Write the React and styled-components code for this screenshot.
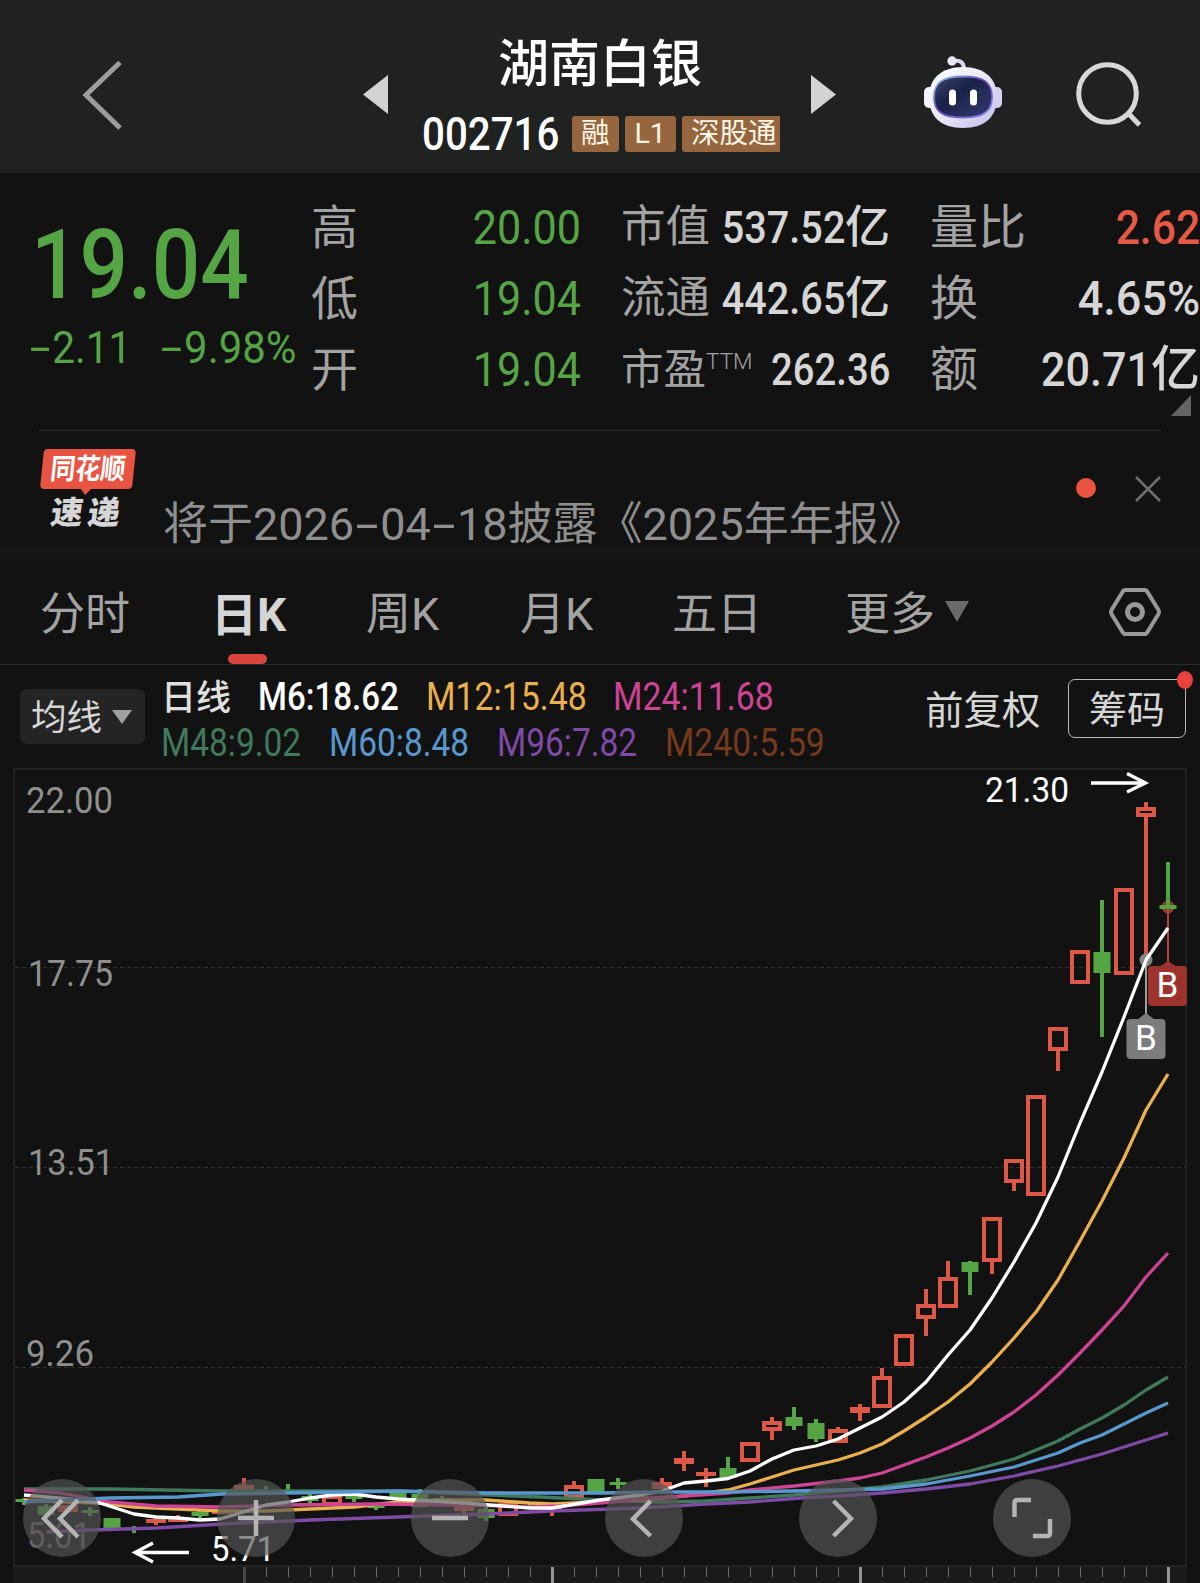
// Components==============
import React from "react";
import styled, { createGlobalStyle, ThemeProvider } from "styled-components";
// =========================

const theme = {
  bg: "#121212",
  header: "#202221",
  line: "#2c2c2c",
  label: "#a3a3a3",
  value: "#d6d6d6",
  white: "#ffffff",
  green: "#56a545",
  red: "#e65a45",
  tag: "#96663e",
};

const GlobalStyle = createGlobalStyle`
  * {
    box-sizing: border-box;
  }
  body {
    margin: 0;
    background: #121212;
    font-family: Roboto, "Noto Sans CJK SC", sans-serif;
  }
`;

const Page = styled.div`
  width: 1200px;
  height: 1583px;
  overflow: hidden;
  display: flex;
  flex-direction: column;
  background: ${({ theme }) => theme.bg};
`;

// narrow digits, squeezed toward one side
const Num = styled.span`
  display: inline-block;
  white-space: nowrap;
  transform: scaleX(${({ $fit }) => $fit || 0.88});
  transform-origin: ${({ $from }) => $from || "right"} center;
`;

const DashBox = styled.span`
  display: inline-block;
  width: ${({ $w }) => $w || 0.6}em;
  text-align: center;
  transform: scaleX(1.85);
`;

const Dash = ({ w }) => <DashBox $w={w}>-</DashBox>;

// Header ==================
const Header = styled.header`
  height: 173px;
  flex: none;
  display: grid;
  grid-template-columns: 363px 26px 422px 26px 87px 80px 1fr;
  background: ${({ theme }) => theme.header};
  color: ${({ theme }) => theme.white};
`;

const BackIcon = styled.svg`
  width: 46px;
  height: 76px;
  margin: 57px 0 0 80px;
`;

const Arrow = styled.svg`
  width: 26px;
  height: 40px;
  margin-top: 75px;
`;

const TitleBlock = styled.div`
  display: flex;
  flex-direction: column;
  align-items: center;
  padding-top: 32px;
`;

const Name = styled.h1`
  margin: 0;
  font-size: 51px;
  line-height: 65px;
  font-weight: 500;
`;

const CodeRow = styled.div`
  display: flex;
  align-items: center;
  align-self: flex-start;
  height: 36px;
  margin: 19px 0 0 33px;
  gap: 6px;
`;

const Code = styled.div`
  width: 144px;
  flex: none;
  font-size: 46px;
  line-height: 36px;
  font-weight: 500;
`;

const Tags = styled.div`
  display: flex;
  gap: 6px;
  width: 208px;
  overflow: hidden;
`;

const Tag = styled.span`
  flex: none;
  height: 36px;
  padding: 0 ${({ $pad }) => $pad || 9}px;
  line-height: 36px;
  font-size: 28.5px;
  border-radius: 3px;
  color: #fff6e6;
  background: ${({ theme }) => theme.tag};
`;

const Robot = styled.svg`
  width: 80px;
  height: 76px;
  margin-top: 55px;
`;

const SearchIcon = styled.svg`
  width: 72px;
  height: 72px;
  margin: 60px 0 0 69px;
`;

// Quote ===================
const Quote = styled.section`
  height: 257px;
  flex: none;
  display: grid;
  grid-template-columns: 311px 270px 40px 269px 40px 270px;
  padding-top: 19px;
  color: ${({ theme }) => theme.value};
  position: relative;
`;

const PriceBlock = styled.div`
  color: ${({ theme }) => theme.green};
  padding: 24px 0 0 28px;
`;

const Price = styled.div`
  font-size: 97px;
  line-height: 99px;
  font-weight: 500;
  padding-left: 3px;
`;

const Change = styled.div`
  display: flex;
  font-size: 45px;
  line-height: 66px;
  white-space: nowrap;
`;

const ChangeCell = styled.div`
  width: ${({ $w }) => $w}px;
`;

const Column = styled.div`
  grid-column: ${({ $at }) => $at};
`;

const Stat = styled.div`
  display: flex;
  justify-content: space-between;
  height: 71px;
  line-height: 71px;
  white-space: nowrap;
  font-size: ${({ $size }) => $size}px;
`;

const StatLabel = styled.span`
  color: ${({ theme }) => theme.label};
  font-size: ${({ $size }) => $size}px;
  display: flex;
`;

const Ttm = styled.span`
  font-size: 22.5px;
  line-height: 54px;
  font-weight: 300;
`;

const StatValue = styled.span`
  display: flex;
  justify-content: flex-end;
  width: 0;
  font-weight: ${({ $weight }) => $weight || 500};
  color: ${({ $color, theme }) => theme[$color || "value"]};
`;

const Corner = styled.svg`
  position: absolute;
  right: 9px;
  bottom: 14px;
  width: 20px;
  height: 21px;
`;

// News ====================
const News = styled.section`
  height: 117px;
  flex: none;
  display: flex;
  margin: 0 39px;
  border-top: 1px solid ${({ theme }) => theme.line};
`;

const Badge = styled.div`
  width: 98px;
  flex: none;
  padding-top: 18px;
`;

const BadgeTop = styled.div`
  position: relative;
  width: 92px;
  height: 40px;
  margin-left: 3px;
  border-radius: 4px;
  transform: skewX(-6deg);
  background: #e95442;
  color: #fff;
  font-size: 25px;
  line-height: 42px;
  font-weight: 700;
  text-align: center;

  &::after {
    content: "";
    position: absolute;
    left: 40px;
    top: 39px;
    border: 6px solid transparent;
    border-top: 7px solid #e95442;
    border-bottom: 0;
  }
`;

const BadgeWord = styled.span`
  display: inline-block;
  transform: scaleY(1.15);
`;

const BadgeBottom = styled.div`
  margin: 7px 0 0 12px;
  font-size: 32px;
  line-height: 34px;
  font-weight: 900;
  letter-spacing: 5px;
  color: ${({ theme }) => theme.value};
  transform: skewX(-8deg);
  white-space: nowrap;
`;

const NewsText = styled.div`
  flex: 1;
  padding: 73px 0 0 26px;
  font-size: 45px;
  line-height: 42px;
  color: #8f8f8f;
  white-space: nowrap;
`;

const Dot = styled.i`
  width: 20px;
  height: 20px;
  margin: 47px 39px 0 0;
  border-radius: 50%;
  background: #e95442;
`;

const CloseIcon = styled.svg`
  width: 26px;
  height: 26px;
  margin-top: 45px;
`;

const Band = styled.div`
  height: 12px;
  flex: none;
  background: #161616;
`;

// Tabs ====================
const Tabs = styled.nav`
  height: 106px;
  flex: none;
  display: grid;
  grid-template-columns: 171px 155px 154px 152px 173px 263px 1fr;
  padding-left: 40px;
  border-bottom: 1px solid ${({ theme }) => theme.line};
`;

const Tab = styled.div`
  position: relative;
  display: flex;
  font-size: ${({ $active }) => ($active ? 46 : 45)}px;
  line-height: 112px;
  height: 105px;
  white-space: nowrap;
  font-weight: ${({ $active }) => ($active ? 700 : 400)};
  color: ${({ $active, theme }) => ($active ? theme.value : theme.label)};
`;

const Underline = styled.i`
  position: absolute;
  left: 17px;
  bottom: 0;
  width: 39px;
  height: 10px;
  border-radius: 5px;
  background: #d9453d;
`;

const Caret = styled.svg`
  width: ${({ $w }) => $w}px;
  height: ${({ $h }) => $h}px;
  margin-left: 10px;
  margin-top: ${({ $top }) => $top || 0}px;
`;

const HexIcon = styled.svg`
  width: 54px;
  height: 52px;
  margin-top: 27px;
`;

// Legend ==================
const Legend = styled.div`
  height: 95px;
  flex: none;
  display: flex;
  padding-left: 20px;
`;

const Picker = styled.button`
  width: 125px;
  height: 55px;
  margin-top: 24px;
  padding: 0 0 0 11px;
  border: 0;
  border-radius: 7px;
  background: #242424;
  color: ${({ theme }) => theme.value};
  font: 35.5px/53px Roboto, "Noto Sans CJK SC", sans-serif;
  display: flex;
  align-items: center;
`;

const PickerText = styled.span`
  padding-top: 4px;
`;

const Averages = styled.div`
  width: 780px;
  padding: 9px 0 0 16px;
`;

const AvgRow = styled.div`
  display: flex;
  height: 46px;
  line-height: 46px;
`;

const Avg = styled.div`
  width: ${({ $w }) => $w}px;
  color: ${({ $color }) => $color};
  font-size: ${({ $size }) => $size || 38}px;
  font-weight: ${({ $weight }) => $weight || 400};
  padding-top: ${({ $drop }) => $drop || 0}px;
  white-space: nowrap;
`;

const Adjust = styled.div`
  width: 143px;
  line-height: 91px;
  font-size: 38.5px;
  color: ${({ theme }) => theme.value};
  white-space: nowrap;
`;

const Chips = styled.button`
  position: relative;
  width: 118px;
  height: 59px;
  margin-top: 14px;
  padding: 2px 0 0;
  border: 1px solid #bbb;
  border-radius: 7px;
  background: none;
  color: ${({ theme }) => theme.value};
  font: 38px/54px Roboto, "Noto Sans CJK SC", sans-serif;

  &::after {
    content: "";
    position: absolute;
    right: -8px;
    top: -9px;
    width: 16px;
    height: 18px;
    border-radius: 50%;
    background: #e8413e;
  }
`;

// Chart ===================
const ChartWrap = styled.div`
  position: relative;
  height: 823px;
  flex: none;
`;

const ChartSvg = styled.svg`
  display: block;
  width: 1200px;
  height: 823px;
  font-family: Roboto, sans-serif;
`;

const Controls = styled.div`
  position: absolute;
  left: 23px;
  top: 719px;
  display: flex;
  gap: 116px;
`;

const Control = styled.button`
  width: 78px;
  height: 78px;
  padding: 0;
  border: 0;
  border-radius: 50%;
  background: rgba(86, 86, 86, 0.68);

  svg {
    display: block;
    width: 78px;
    height: 78px;
    fill: none;
    stroke: #b4b4b4;
    stroke-width: 4.5;
  }
`;

// x, high, open/close top, open/close bottom, low, kind
// kinds: r = rising (hollow), g = falling (solid), x = rising with a thin body
const candles = [
  [24, 1498, 1499, 1502, 1505, "g"],
  [46, 1504, 1506, 1515, 1515, "g"],
  [68, 1505, 1505, 1512, 1512, "x"],
  [90, 1507, 1510, 1513, 1516, "g"],
  [112, 1518, 1518, 1528, 1528, "g"],
  [134, 1526, 1528, 1530, 1533, "g"],
  [156, 1517, 1519, 1523, 1525, "x"],
  [178, 1515, 1518, 1522, 1522, "x"],
  [200, 1509, 1512, 1516, 1519, "g"],
  [222, 1510, 1510, 1514, 1514, "x"],
  [244, 1478, 1485, 1491, 1491, "x"],
  [266, 1486, 1490, 1492, 1492, "g"],
  [288, 1484, 1491, 1493, 1494, "g"],
  [310, 1491, 1496, 1501, 1503, "g"],
  [332, 1495, 1495, 1506, 1506, "r"],
  [354, 1493, 1496, 1499, 1502, "g"],
  [376, 1504, 1506, 1508, 1510, "g"],
  [398, 1493, 1493, 1499, 1500, "g"],
  [420, 1489, 1494, 1507, 1507, "g"],
  [442, 1496, 1498, 1504, 1504, "g"],
  [464, 1505, 1505, 1511, 1514, "x"],
  [486, 1506, 1509, 1518, 1521, "g"],
  [508, 1502, 1503, 1516, 1516, "r"],
  [530, 1504, 1506, 1509, 1509, "g"],
  [552, 1508, 1508, 1512, 1516, "x"],
  [574, 1481, 1485, 1499, 1499, "r"],
  [596, 1479, 1479, 1492, 1492, "g"],
  [618, 1478, 1482, 1485, 1489, "g"],
  [640, 1494, 1496, 1499, 1499, "g"],
  [662, 1478, 1482, 1489, 1489, "x"],
  [684, 1451, 1458, 1464, 1471, "x"],
  [706, 1468, 1472, 1476, 1487, "x"],
  [728, 1457, 1468, 1478, 1478, "g"],
  [750, 1442, 1442, 1462, 1462, "r"],
  [772, 1417, 1421, 1431, 1440, "r"],
  [794, 1407, 1417, 1426, 1430, "g"],
  [816, 1419, 1423, 1439, 1442, "g"],
  [838, 1427, 1429, 1443, 1443, "r"],
  [860, 1404, 1407, 1413, 1421, "x"],
  [882, 1368, 1376, 1408, 1408, "r"],
  [904, 1334, 1334, 1366, 1366, "r"],
  [926, 1289, 1304, 1319, 1336, "r"],
  [948, 1261, 1277, 1308, 1308, "r"],
  [970, 1261, 1262, 1272, 1295, "g"],
  [992, 1217, 1217, 1262, 1274, "r"],
  [1014, 1159, 1159, 1183, 1191, "r"],
  [1036, 1095, 1095, 1196, 1196, "r"],
  [1058, 1027, 1027, 1051, 1071, "r"],
  [1080, 950, 950, 984, 984, "r"],
  [1102, 900, 952, 973, 1037, "g"],
  [1124, 888, 888, 975, 975, "r"],
  [1146, 802, 807, 817, 958, "r"],
];

const averageLines = [
  {
    color: "#7f4aa5",
    points:
      "46,1532 90,1530 156,1528 222,1524 310,1520 398,1517 486,1514 552,1511 640,1508 706,1504 750,1502 800,1498 838,1496 882,1493 926,1489 970,1484 1014,1476 1058,1466 1102,1454 1168,1433",
  },
  {
    color: "#40795c",
    points:
      "24,1489 110,1489 222,1491 398,1491 464,1494 540,1497 600,1500 660,1502 706,1501 750,1498 794,1495 838,1491 882,1487 926,1480 970,1471 1014,1459 1058,1441 1080,1429 1102,1418 1124,1405 1146,1390 1168,1377",
  },
  {
    color: "#eab04d",
    points:
      "24,1500 68,1502 100,1503 134,1507 178,1509 222,1511 266,1511 310,1509 354,1507 398,1502 440,1500 486,1500 530,1503 552,1504 574,1503 640,1500 684,1496 706,1493 728,1490 750,1484 772,1477 794,1470 816,1465 838,1460 860,1453 882,1444 904,1431 926,1417 948,1402 970,1384 992,1362 1014,1338 1036,1312 1058,1280 1080,1241 1102,1201 1124,1158 1146,1110 1168,1074",
  },
  {
    color: "#ce4494",
    points:
      "24,1490 60,1493 110,1502 156,1506 222,1507 288,1505 376,1504 464,1505 530,1507 560,1506 600,1503 640,1499 684,1496 728,1493 750,1490 794,1486 838,1481 860,1478 882,1473 904,1465 926,1457 948,1448 970,1438 992,1426 1014,1412 1036,1395 1058,1375 1080,1353 1102,1330 1124,1306 1146,1277 1168,1253",
  },
  {
    color: "#fff",
    points:
      "24,1495 68,1499 100,1503 134,1514 156,1517 178,1518 200,1520 220,1519 240,1513 266,1505 288,1502 310,1498 332,1495 354,1494 376,1497 398,1499 464,1503 530,1508 552,1508 600,1500 640,1495 662,1491 684,1483 706,1481 728,1478.5 750,1471 772,1459 794,1450 816,1446 838,1439 860,1428 882,1417 904,1402 926,1382 948,1355 970,1330 992,1298 1014,1262 1036,1223 1058,1177 1080,1123 1102,1072 1124,1017 1146,960 1168,928",
  },
  {
    color: "#5998cf",
    points:
      "24,1502 46,1501 110,1498 178,1497 222,1494 288,1493 398,1491 440,1492 486,1493 600,1493 660,1492 728,1492 794,1491 838,1490 882,1489 926,1484 970,1476 1014,1467 1058,1453 1080,1443 1102,1435 1124,1424 1146,1413 1168,1403",
  },
];

const yLabels = [
  ["22.00", 26, 813, 87],
  ["17.75", 28, 986, 85],
  ["13.51", 28, 1175, 86],
  ["9.26", 26, 1366, 68],
  ["5.01", 27, 1548, 64],
];

function Candle({ data }) {
  const [x, high, top, bottom, low, kind] = data;
  if (kind === "g") {
    return (
      <g fill="#56a545">
        <rect x={x - 2} y={high} width={4} height={low - high} />
        <rect x={x - 8.5} y={top} width={17} height={bottom - top} />
      </g>
    );
  }
  return (
    <g fill="#dd5846">
      <rect x={x - 2} y={high} width={4} height={top - high} />
      <rect x={x - 2} y={bottom} width={4} height={low - bottom} />
      {kind === "x" ? (
        <rect x={x - 10} y={top} width={20} height={bottom - top} />
      ) : (
        <rect
          x={x - 8}
          y={top + 2}
          width={16}
          height={bottom - top - 4}
          fill="none"
          stroke="#dd5846"
          strokeWidth={4}
        />
      )}
    </g>
  );
}

function Chart() {
  const ticks = [];
  for (let x = 244; x <= 1168; x += 22) ticks.push(x);

  return (
    <ChartSvg viewBox="0 760 1200 823">
      <rect x={13} y={1567} width={1174} height={16} fill="#1a1a1a" />
      <rect
        x={14}
        y={769}
        width={1172}
        height={797}
        fill="none"
        stroke="#222222"
        strokeWidth={2}
      />
      {[967.5, 1167.5, 1367.5].map((y) => (
        <path
          key={y}
          d={`M15 ${y}H1186`}
          stroke="#303030"
          strokeDasharray="4 3"
        />
      ))}
      {ticks.map((x) => {
        const major = (x - 244) % 308 === 0;
        return (
          <rect
            key={x}
            x={major ? x - 1 : x}
            y={1567}
            width={major ? 3 : 1}
            height={major ? 16 : 10}
            fill={x === 244 ? "#484848" : major ? "#949494" : "#6c6c6c"}
          />
        );
      })}
      {yLabels.map(([text, x, y, w]) => (
        <text
          key={text}
          x={x}
          y={y}
          textLength={w}
          lengthAdjust="spacingAndGlyphs"
          fontSize={37}
          fill={text === "5.01" ? "#6f6f6f" : "#8f8f8f"}
        >
          {text}
        </text>
      ))}
      {candles.map((c) => (
        <Candle key={c[0]} data={c} />
      ))}
      <circle cx={1168} cy={907} r={6.5} fill="#943a31" />
      <path d="M1168 862V907M1159.5 907H1176.5" stroke="#56a545" strokeWidth={4} />
      <path d="M1168 909V962" stroke="#b5403a" strokeWidth={2} />
      <circle cx={1146} cy={960} r={6.5} fill="#858585" />
      <path d="M1146 960V1015" stroke="#a0a0a0" strokeWidth={2} />
      {averageLines.map((l) => (
        <polyline
          key={l.color}
          points={l.points}
          fill="none"
          stroke={l.color}
          strokeWidth={3.3}
          strokeLinejoin="round"
        />
      ))}
      <path d="M1159 967L1168 961L1177 967Z" fill="#9c342d" />
      <rect x={1148} y={966} width={39} height={40} rx={4} fill="#9c342d" />
      <path d="M1137 1020L1146 1013L1155 1020Z" fill="#7c7c7c" />
      <rect x={1126.5} y={1019} width={39} height={40} rx={4} fill="#7c7c7c" />
      <g fill="#fff" fontSize={35} textAnchor="middle">
        <text x={1167.5} y={997}>B</text>
        <text x={1146} y={1050}>B</text>
      </g>
      <g fill="#fff" fontSize={35}>
        <text x={985} y={802} textLength={84} lengthAdjust="spacingAndGlyphs">
          21.30
        </text>
        <text x={211} y={1561} textLength={64} lengthAdjust="spacingAndGlyphs">
          5.71
        </text>
      </g>
      <g fill="none" stroke="#fff" strokeWidth={3.3}>
        <path d="M1091 783H1146M1127 773.5L1145.5 783L1127 792" />
        <path d="M189 1552.5H135M153 1543L135 1552.5L153 1562" />
      </g>
    </ChartSvg>
  );
}

const controls = [
  "M55 21L37 39.5L55 58M39 21L21 39.5L39 58",
  "M39 21V57M21 39H57",
  "M21 39H57",
  "M45.5 22L28 40L45.5 57",
  "M34.5 22L52 39.5L34.5 57",
  "M21.5 38V24Q21.5 21 24.5 21H38M57 40V54Q57 57 54 57H40",
];

export default function App() {
  return (
    <ThemeProvider theme={theme}>
      <GlobalStyle />
      <Page>
        <Header>
          <BackIcon viewBox="0 0 46 76" fill="none" stroke="#9d9d9d" strokeWidth="5">
            <path d="M40 5.5L6 38L40 71" />
          </BackIcon>
          <Arrow viewBox="0 0 26 40" fill="#d3d3d3">
            <path d="M0 19.5L25 0V39Z" />
          </Arrow>
          <TitleBlock>
            <Name>湖南白银</Name>
            <CodeRow>
              <Code>
                <Num $from="left" $fit={0.875}>002716</Num>
              </Code>
              <Tags>
                <Tag>融</Tag>
                <Tag $pad={10}>L1</Tag>
                <Tag>深股通</Tag>
              </Tags>
            </CodeRow>
          </TitleBlock>
          <Arrow viewBox="0 0 26 40" fill="#d3d3d3">
            <path d="M25 19.5L0 0V39Z" />
          </Arrow>
          <span />
          <Robot viewBox="0 0 80 76">
            <defs>
              <linearGradient id="shell" x1="0" y1="0" x2="1" y2="1">
                <stop offset="0" stopColor="#ffffff" />
                <stop offset="0.55" stopColor="#e6e5f5" />
                <stop offset="1" stopColor="#bdb9e8" />
              </linearGradient>
              <linearGradient id="rim" x1="0" y1="0" x2="1" y2="1">
                <stop offset="0" stopColor="#8ed3ea" />
                <stop offset="0.45" stopColor="#6a42bd" />
                <stop offset="1" stopColor="#7480ee" />
              </linearGradient>
              <linearGradient id="face" x1="0" y1="0" x2="1" y2="1">
                <stop offset="0" stopColor="#3e4669" />
                <stop offset="0.4" stopColor="#1b2248" />
                <stop offset="1" stopColor="#343b6e" />
              </linearGradient>
            </defs>
            <path d="M29 6Q39 4 40 13" fill="none" stroke="#d7d7ea" strokeWidth="4" />
            <circle cx="28" cy="6" r="4.7" fill="#e6e6f4" />
            <rect x="0" y="32" width="12" height="21" rx="5" fill="#f3f3fc" />
            <rect x="66" y="32" width="12" height="21" rx="5" fill="#d6d3f2" />
            <path
              d="M39 12C61 12 73 24 73 42C73 62 61 73 39 73C17 73 5 62 5 42C5 24 17 12 39 12Z"
              fill="url(#shell)"
            />
            <path
              d="M39 21.5C59 21.5 68 27 68 42C68 56 60 62.5 39 62.5C18 62.5 10 56 10 42C10 27 19 21.5 39 21.5Z"
              fill="url(#face)"
              stroke="url(#rim)"
              strokeWidth="1.8"
            />
            <rect x="25" y="34.5" width="7" height="16" rx="3.5" fill="#fff" />
            <rect x="46" y="34.5" width="7" height="16" rx="3.5" fill="#fff" />
          </Robot>
          <SearchIcon viewBox="0 0 72 72" fill="none" stroke="#d8d8d8" strokeWidth="5">
            <circle cx="34.5" cy="33.5" r="28.8" />
            <path d="M54.5 52.5L66.5 65" />
          </SearchIcon>
        </Header>

        <Quote>
          <PriceBlock>
            <Price>
              <Num $from="left" $fit={0.88}>19.04</Num>
            </Price>
            <Change>
              <ChangeCell $w={131}>
                <Num $from="left" $fit={0.9}><Dash />2.11</Num>
              </ChangeCell>
              <ChangeCell $w={140}>
                <Num $from="left" $fit={0.93}><Dash />9.98%</Num>
              </ChangeCell>
            </Change>
          </PriceBlock>
          <Column $at={2}>
            {[["高", "20.00"], ["低", "19.04"], ["开", "19.04"]].map(([k, v]) => (
              <Stat key={k} $size={49}>
                <StatLabel $size={47}>{k}</StatLabel>
                <StatValue $color="green" $weight={400}>
                  <Num>{v}</Num>
                </StatValue>
              </Stat>
            ))}
          </Column>
          <Column $at={4}>
            <Stat $size={45}>
              <StatLabel $size={44.5}>市值</StatLabel>
              <StatValue><Num>537.52</Num>亿</StatValue>
            </Stat>
            <Stat $size={45}>
              <StatLabel $size={44.5}>流通</StatLabel>
              <StatValue><Num>442.65</Num>亿</StatValue>
            </Stat>
            <Stat $size={45}>
              <StatLabel $size={42.5}>市盈<Ttm>TTM</Ttm></StatLabel>
              <StatValue><Num $fit={0.85}>262.36</Num></StatValue>
            </Stat>
          </Column>
          <Column $at={6}>
            <Stat $size={49}>
              <StatLabel $size={48}>量比</StatLabel>
              <StatValue $color="red"><Num $fit={0.87}>2.62</Num></StatValue>
            </Stat>
            <Stat $size={49}>
              <StatLabel $size={48}>换</StatLabel>
              <StatValue><Num $fit={0.92}>4.65%</Num></StatValue>
            </Stat>
            <Stat $size={49}>
              <StatLabel $size={48}>额</StatLabel>
              <StatValue><Num>20.71</Num>亿</StatValue>
            </Stat>
          </Column>
          <Corner viewBox="0 0 20 21">
            <path d="M20 0V21H0Z" fill="#646464" />
          </Corner>
        </Quote>

        <News>
          <Badge>
            <BadgeTop>
              <BadgeWord>同花顺</BadgeWord>
            </BadgeTop>
            <BadgeBottom>速递</BadgeBottom>
          </Badge>
          <NewsText>
            将于2026<Dash w={0.58} />04<Dash w={0.58} />18披露《2025年年报》
          </NewsText>
          <Dot />
          <CloseIcon viewBox="0 0 26 26" stroke="#6e6e6e" strokeWidth="2.5">
            <path d="M1 1L25 25M25 1L1 25" />
          </CloseIcon>
        </News>
        <Band />

        <Tabs>
          <Tab>分时</Tab>
          <Tab $active>
            日K
            <Underline />
          </Tab>
          <Tab>周K</Tab>
          <Tab>月K</Tab>
          <Tab>五日</Tab>
          <Tab>
            更多
            <Caret $w={24} $h={21} $top={42} viewBox="0 0 24 21">
              <path d="M0 0H24L12 21Z" fill="#6a6a6a" />
            </Caret>
          </Tab>
          <HexIcon viewBox="0 0 54 52" fill="none" stroke="#989898">
            <path
              d="M17.5 4H36.5Q38.5 4 39.5 6L50.5 24Q51.5 26 50.5 28L39.5 46Q38.5 48 36.5 48H17.5Q15.5 48 14.5 46L3.5 28Q2.5 26 3.5 24L14.5 6Q15.5 4 17.5 4Z"
              strokeWidth="4"
            />
            <circle cx="27" cy="26" r="7.5" strokeWidth="5" />
          </HexIcon>
        </Tabs>

        <Legend>
          <Picker>
            <PickerText>均线</PickerText>
            <Caret $w={20} $h={14} viewBox="0 0 20 14">
              <path d="M0 0H20L10 14Z" fill="#a0a0a0" />
            </Caret>
          </Picker>
          <Averages>
            <AvgRow>
              <Avg $w={97} $size={35} $weight={500} $drop={2} $color="#e0e0e0">日线</Avg>
              <Avg $w={168} $weight={500} $color="#fff">
                <Num $from="left" $fit={0.87}>M6:18.62</Num>
              </Avg>
              <Avg $w={187} $color="#eab04d">
                <Num $from="left" $fit={0.89}>M12:15.48</Num>
              </Avg>
              <Avg $w={160} $color="#ce4494">
                <Num $from="left" $fit={0.89}>M24:11.68</Num>
              </Avg>
            </AvgRow>
            <AvgRow>
              <Avg $w={168} $color="#40795c">
                <Num $from="left">M48:9.02</Num>
              </Avg>
              <Avg $w={168} $color="#5998cf">
                <Num $from="left">M60:8.48</Num>
              </Avg>
              <Avg $w={168} $color="#7f4aa5">
                <Num $from="left">M96:7.82</Num>
              </Avg>
              <Avg $w={160} $color="#75391c">
                <Num $from="left" $fit={0.885}>M240:5.59</Num>
              </Avg>
            </AvgRow>
          </Averages>
          <Adjust>前复权</Adjust>
          <Chips>筹码</Chips>
        </Legend>

        <ChartWrap>
          <Chart />
          <Controls>
            {controls.map((d) => (
              <Control key={d}>
                <svg viewBox="0 0 78 78">
                  <path d={d} />
                </svg>
              </Control>
            ))}
          </Controls>
        </ChartWrap>
      </Page>
    </ThemeProvider>
  );
}
